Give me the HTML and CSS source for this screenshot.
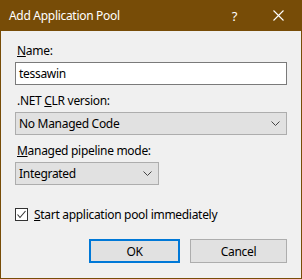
FILE: index.html
```
<!DOCTYPE html>
<html lang="en">
<head>
  <meta charset="UTF-8" />
  <title>Add Application Pool</title>
  <link rel="stylesheet" href="styles.css">
</head>
<body>
  <div class="window">
    <div class="titlebar">
      <span class="title">Add Application Pool</span>
      <span class="help">?</span>
      <svg class="close" width="11" height="11" viewBox="0 0 11 11">
        <path d="M0.5 0.5 L10.5 10.5 M10.5 0.5 L0.5 10.5" stroke="#fff" stroke-width="1.1" fill="none" />
      </svg>
    </div>

    <div class="content">
      <label class="field-label"><u>N</u>ame:</label>
      <div class="textbox">tessawin</div>

      <label class="field-label">.NET <u>C</u>LR version:</label>
      <div class="combo wide">
        <span>No Managed Code</span>
        <svg width="9" height="5" viewBox="0 0 9 5"><polyline points="0.5,0.5 4.5,4.5 8.5,0.5" stroke="#444" fill="none" /></svg>
      </div>

      <label class="field-label"><u>M</u>anaged pipeline mode:</label>
      <div class="combo narrow">
        <span>Integrated</span>
        <svg width="9" height="5" viewBox="0 0 9 5"><polyline points="0.5,0.5 4.5,4.5 8.5,0.5" stroke="#444" fill="none" /></svg>
      </div>

      <div class="check-row">
        <span class="checkbox">
          <svg width="11" height="11" viewBox="0 0 11 11"><polyline points="1.5,5.5 4,8.5 9.5,2" stroke="#333" stroke-width="1.1" fill="none" /></svg>
        </span>
        <span><u>S</u>tart application pool immediately</span>
      </div>

      <div class="buttons">
        <button class="btn default">OK</button>
        <button class="btn cancel">Cancel</button>
      </div>
    </div>
  </div>
</body>
</html>
```
FILE: styles.css
```
body {
  margin: 0;
  font-family: "Noto Sans", Arial, sans-serif;
  font-size: 12px;
  letter-spacing: -0.3px;
  color: #000;
}

.window {
  width: 302px;
  height: 279px;
  box-sizing: border-box;
  background: #f0f0f0;
  border: 1px solid #774c07;
  border-top: none;
}

.titlebar {
  height: 31px;
  margin: 0 -1px;
  background: #774c07;
  color: #fff;
  display: flex;
  align-items: center;
  padding-left: 9px;
  font-size: 12px;
}

.title {
  flex: 1;
}

.help {
  font-size: 13px;
  margin-right: 36px;
}

.close {
  margin-right: 18px;
}

.content {
  padding: 12px 14px 0 14px;
}

.field-label {
  display: block;
  line-height: 16px;
  padding-left: 2px;
  margin-bottom: 3px;
}

.textbox {
  height: 21px;
  border: 1px solid #7a7a7a;
  background: #fff;
  line-height: 21px;
  padding-left: 3px;
  margin-bottom: 8px;
}

.combo {
  height: 21px;
  border: 1px solid #adadad;
  background: #e1e1e1;
  display: flex;
  align-items: center;
  justify-content: space-between;
  padding: 0 6px 0 3px;
  margin-bottom: 8px;
}

.combo.narrow {
  width: 133px;
}

.check-row {
  display: flex;
  align-items: center;
  gap: 6px;
  margin-top: 21px;
}

.checkbox {
  width: 11px;
  height: 11px;
  border: 1px solid #333;
  background: #fff;
  display: flex;
}

.buttons {
  display: flex;
  justify-content: flex-end;
  gap: 10px;
  margin-top: 16px;
}

.btn {
  height: 24px;
  background: #e1e1e1;
  border: 1px solid #adadad;
  font-family: inherit;
  font-size: 12px;
  letter-spacing: inherit;
  padding: 0;
  box-sizing: border-box;
}

.btn.default {
  width: 91px;
  border: 2px solid #0078d7;
}

.btn.cancel {
  width: 97px;
}
```
